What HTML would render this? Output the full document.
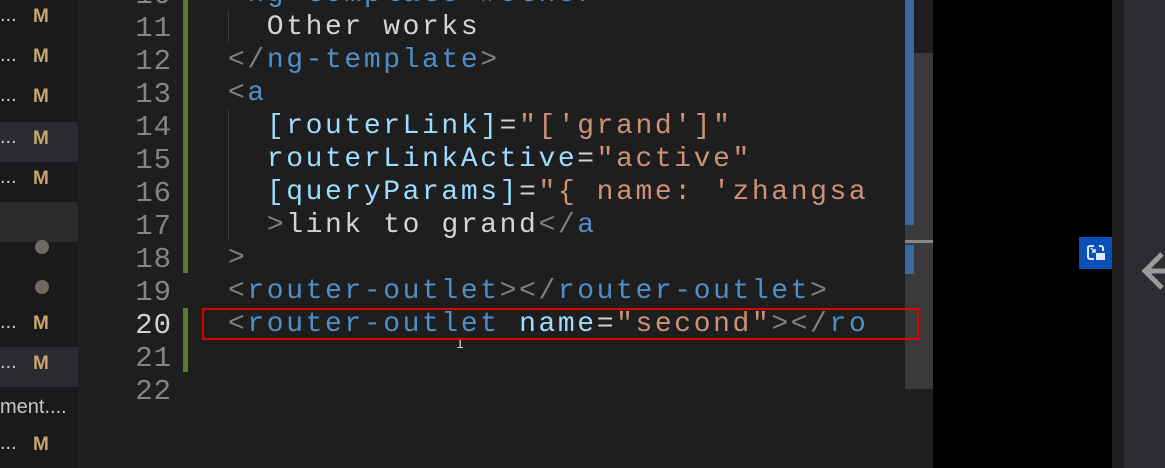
<!DOCTYPE html>
<html><head><style>
*{margin:0;padding:0}
body{width:1165px;height:468px;overflow:hidden;background:#000;position:relative;font-family:"Liberation Mono",monospace}
.abs{position:absolute}
#side{left:0;top:0;width:78px;height:468px;background:#1a1a1c}
.row{position:absolute;left:0;width:78px;height:40px;font-family:"Liberation Sans",sans-serif;font-size:20px;color:#c8c8c8}
.row .m{position:absolute;left:33px;top:6px;color:#c9a769;font-weight:bold;font-size:19px}
.row .d{position:absolute;left:0;top:4px}
.row .dot{position:absolute;left:35px;top:14px;width:14px;height:14px;border-radius:50%;background:#6e6a60}
#ed{left:78px;top:0;width:855px;height:468px;background:#1e1e1e}
.ln{position:absolute;left:100px;width:72px;text-align:right;font-size:29px;color:#858585;letter-spacing:1px}
.code{position:absolute;left:228px;font-size:28px;letter-spacing:2.6px;white-space:pre;color:#d4d4d4}
.p{color:#808080}.t{color:#4f8fc9}.a{color:#9cdcfe}.s{color:#ce9178}
</style></head><body>
<div id="ed" class="abs"></div>
<div id="side" class="abs">
<div class="row" style="top:0"><span class="d">...</span><span class="m">M</span></div>
<div class="row" style="top:40px"><span class="d">...</span><span class="m">M</span></div>
<div class="row" style="top:80px"><span class="d">...</span><span class="m">M</span></div>
<div class="row" style="top:122px;background:#2a2a30"><span class="d">...</span><span class="m">M</span></div>
<div class="row" style="top:162px"><span class="d">...</span><span class="m">M</span></div>
<div class="row" style="top:202px;background:#2b2b2d"></div>
<div class="row" style="top:226px"><span class="dot"></span></div>
<div class="row" style="top:266px"><span class="dot"></span></div>
<div class="row" style="top:307px"><span class="d">...</span><span class="m">M</span></div>
<div class="row" style="top:347px;background:#2a2a30"><span class="d">...</span><span class="m">M</span></div>
<div class="row" style="top:388px"><span class="d" style="top:8px">ment....</span></div>
<div class="row" style="top:428px"><span class="d">...</span><span class="m">M</span></div>
</div>
<div class="abs" style="left:183px;top:0;width:5px;height:273px;background:#587c2c"></div>
<div class="abs" style="left:183px;top:308px;width:5px;height:64px;background:#587c2c"></div>
<div class="abs" style="left:228px;top:10px;width:1px;height:32px;background:#3a3a3a"></div>
<div class="abs" style="left:228px;top:110px;width:1px;height:130px;background:#3a3a3a"></div>

<div class="ln" style="top:-21px">10</div>
<div class="ln" style="top:12px">11</div>
<div class="ln" style="top:45px">12</div>
<div class="ln" style="top:78px">13</div>
<div class="ln" style="top:111px">14</div>
<div class="ln" style="top:144px">15</div>
<div class="ln" style="top:177px">16</div>
<div class="ln" style="top:210px">17</div>
<div class="ln" style="top:243px">18</div>
<div class="ln" style="top:276px">19</div>
<div class="ln" style="top:309px;color:#d0d0d0">20</div>
<div class="ln" style="top:342px">21</div>
<div class="ln" style="top:375px">22</div>

<div class="code" style="top:-21px"><span class="p">&lt;</span><span class="t">ng-template #other</span><span class="p">&gt;</span></div>
<div class="code" style="top:12px">  Other works</div>
<div class="code" style="top:45px"><span class="p">&lt;/</span><span class="t">ng-template</span><span class="p">&gt;</span></div>
<div class="code" style="top:78px"><span class="p">&lt;</span><span class="t">a</span></div>
<div class="code" style="top:111px">  <span class="a">[routerLink]</span>=<span class="s">"['grand']"</span></div>
<div class="code" style="top:144px">  <span class="a">routerLinkActive</span>=<span class="s">"active"</span></div>
<div class="code" style="top:177px">  <span class="a">[queryParams]</span>=<span class="s">"{ name: 'zhangsa</span></div>
<div class="code" style="top:210px">  <span class="p">&gt;</span>link to grand<span class="p">&lt;/</span><span class="t">a</span></div>
<div class="code" style="top:243px"><span class="p">&gt;</span></div>
<div class="code" style="top:276px"><span class="p">&lt;</span><span class="t">router-outlet</span><span class="p">&gt;&lt;/</span><span class="t">router-outlet</span><span class="p">&gt;</span></div>
<div class="code" style="top:309px"><span class="p">&lt;</span><span class="t">router-outlet</span> <span class="a">name</span>=<span class="s">"second"</span><span class="p">&gt;&lt;/</span><span class="t">ro</span></div>
<div class="abs" style="left:456px;top:337px;color:#ccc;font-size:14px">I</div>

<div class="abs" style="left:905px;top:53px;width:28px;height:336px;background:#3b3a3b"></div>
<div class="abs" style="left:905px;top:0;width:9px;height:225px;background:#3a6a99"></div>
<div class="abs" style="left:905px;top:245px;width:9px;height:29px;background:#3a6a99"></div>
<div class="abs" style="left:905px;top:240px;width:28px;height:3px;background:#888"></div>
<div class="abs" style="left:202px;top:308px;width:713px;height:28px;border:2px solid #e00000"></div>

<div class="abs" style="left:1079px;top:237px;width:33px;height:32px;background:#0a50b8"></div>
<svg class="abs" style="left:1085px;top:242px" width="22" height="22" viewBox="0 0 22 22"><path d="M9 4H5a2 2 0 0 0-2 2v9a2 2 0 0 0 2 2h4" stroke="#dfe8f5" stroke-width="2" fill="none"/><path d="M14 4h2a2 2 0 0 1 2 2v3" stroke="#dfe8f5" stroke-width="2" fill="none"/><rect x="11" y="11" width="9" height="7" fill="#dfe8f5"/><path d="M6 6l4 4M10 7v3H7" stroke="#dfe8f5" stroke-width="1.5" fill="none"/></svg>
<div class="abs" style="left:1112px;top:0;width:12px;height:468px;background:#1f1f22"></div>
<div class="abs" style="left:1124px;top:0;width:41px;height:468px;background:#2c2d31"></div>
<svg class="abs" style="left:1140px;top:250px" width="25" height="42" viewBox="0 0 25 42"><path d="M22 4L5 21l17 17M5 21h20" stroke="#9a9a9a" stroke-width="5" fill="none"/></svg>
</body></html>
